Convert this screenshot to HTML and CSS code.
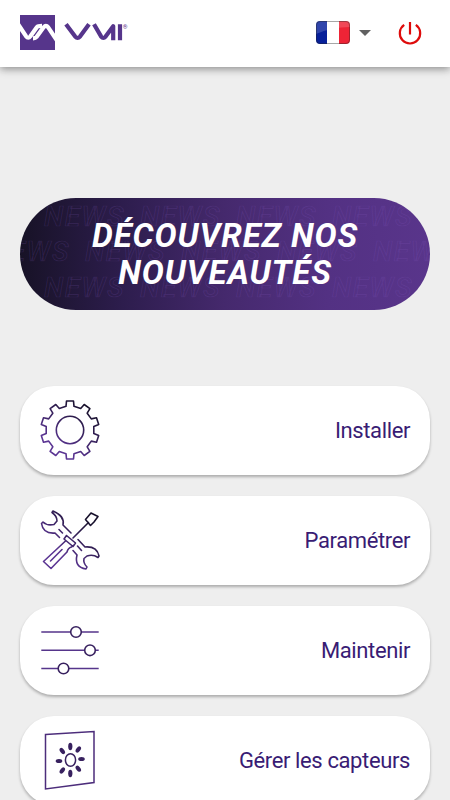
FILE: index.html
```html
<!DOCTYPE html>
<html lang="fr">
  <head>
    <meta charset="utf-8" />
    <meta name="viewport" content="width=device-width, initial-scale=1" />
    <title>VMI</title>
    <link rel="stylesheet" href="styles.css">
  </head>
  <body>
    <header class="topbar">
      <svg class="logo" width="110" height="36" viewBox="20 15 110 36" fill="none" stroke-width="4.2" stroke-linejoin="round">
        <rect x="20" y="15" width="35" height="35" fill="#56358b"/>
        <path d="M18 24L26 36.2Q28.2 39 30.4 36.2L37 27Q38 25.8 42 25.8" stroke="#fff"/>
        <path d="M33 38.3Q35.5 38.3 36.5 37L43.6 27.3Q46 24.6 48.2 27.3L57 40.5" stroke="#fff"/>
        <path d="M66 24.3L75.2 36.6Q77.6 39.2 80 36.6L89 24.3" stroke="#56358b"/>
        <path d="M94 24.3L101.2 36.6Q103.3 39.2 105.6 36.6L113.2 26.2V40.3M120 24.3V40.3" stroke="#56358b"/>
        <text class="logo-mark" x="122.8" y="28.5">®</text>
      </svg>
      <div class="actions">
        <svg class="flag" width="34" height="23" viewBox="0 0 34 23">
          <defs>
            <clipPath id="flagClip"><rect width="34" height="23" rx="4"/></clipPath>
          </defs>
          <g clip-path="url(#flagClip)">
            <path fill="#07209a" d="M0 0h11v23H0z"/>
            <path fill="#fff" d="M11 0h12v23H11z"/>
            <path fill="#ee2436" d="M23 0h11v23H23z"/>
            <path fill="#fff" opacity=".17" d="M0 0H34V6Q16 6 0 13z"/>
          </g>
          <rect x=".5" y=".5" width="33" height="22" rx="3.5" fill="none" stroke="#222" stroke-opacity=".4"/>
        </svg>
        <svg class="caret" width="12" height="6" viewBox="0 0 12 6"><path d="M0 0H12L6 6z" fill="#616161"/></svg>
        <svg class="power" width="24" height="24" viewBox="0 0 24 24" fill="none" stroke="#de0b0b" stroke-width="2.2">
          <path d="M12 1V13.5M6.2 3.9A10.2 10.2 0 1 0 17.8 3.9"/>
        </svg>
      </div>
    </header>

    <main class="content">
      <a class="banner">
        <div class="banner-pattern">
          <div class="pattern-row"><span>NEWS</span><span>NEWS</span><span>NEWS</span><span>NEWS</span></div>
          <div class="pattern-row shifted"><span>NEWS</span><span>NEWS</span><span>NEWS</span><span>NEWS</span><span>NEWS</span></div>
          <div class="pattern-row"><span>NEWS</span><span>NEWS</span><span>NEWS</span><span>NEWS</span></div>
        </div>
        <div class="banner-title">DÉCOUVREZ NOS<br>NOUVEAUTÉS</div>
      </a>

      <nav class="menu">
        <a class="card">
          <svg width="60" height="60" viewBox="-30 -30 60 60" fill="none" stroke="url(#ink)" stroke-width="1.6" stroke-linejoin="round">
            <defs>
              <linearGradient id="ink" gradientUnits="userSpaceOnUse" x1="15" y1="-24" x2="-12" y2="16">
                <stop offset="0" stop-color="#17102b"/>
                <stop offset="1" stop-color="#5b3593"/>
              </linearGradient>
            </defs>
            <circle r="13.7"/>
            <path d="M-4-23.7L-3.5-29H3.5L4-23.7L10.7-21.5L14.2-25.5L19.9-21.4L17.2-16.8L21.3-11.1L26.5-12.3L28.7-5.6L23.8-3.5V3.5L28.7 5.6L26.5 12.3L21.3 11.1L17.2 16.8L19.9 21.4L14.2 25.5L10.7 21.5L4 23.7L3.5 29H-3.5L-4 23.7L-10.7 21.5L-14.2 25.5L-19.9 21.4L-17.2 16.8L-21.3 11.1L-26.5 12.3L-28.7 5.6L-23.8 3.5V-3.5L-28.7-5.6L-26.5-12.3L-21.3-11.1L-17.2-16.8L-19.9-21.4L-14.2-25.5L-10.7-21.5Z"/>
          </svg>
          <span>Installer</span>
        </a>
        <a class="card">
          <svg width="60" height="60" viewBox="0 0 60 60" fill="none" stroke="url(#toolInk)" stroke-width="1.6" stroke-linejoin="round" stroke-linecap="round">
            <defs>
              <linearGradient id="toolInk" gradientUnits="userSpaceOnUse" x1="48" y1="10" x2="18" y2="42">
                <stop offset="0" stop-color="#17102b"/>
                <stop offset="1" stop-color="#5b3593"/>
              </linearGradient>
            </defs>
            <path d="M31 23L23 15Q25 6 13 1L12 2.5Q17 6 17 11L14 14.5Q7 16 3 12L1.5 13.5Q3 24 15 23L19.5 27.5M19 19.5L22.5 23"/>
            <path d="M38 29.5L45 37Q57 36 59 46L58 47.5Q53 44 47 46L44 48.5Q43 53 47 57L46 59Q34 57 37 45L33 40.5M37.5 36L41.5 40.5"/>
            <path d="M33 28L48.5 12.5M45.5 9.5L51 3L58 6.5L54 12L50.5 15.5Z"/>
            <path d="M26.5 25.5L35.5 33L33 36.5L24 29Z M25.5 31L3.5 51.5L11 58.5L27 42Q28 38 31.5 37M10.5 51L22 39.5"/>
          </svg>
          <span>Paramétrer</span>
        </a>
        <a class="card">
          <svg width="60" height="60" viewBox="0 0 60 60" fill="#fff" stroke="#56358b" stroke-width="1.6">
            <path d="M1.3 12H58.7M1.3 30.3H58.7M1.3 48.5H58.7"/>
            <g stroke="#38215f">
              <circle cx="36" cy="12" r="5.3"/>
              <circle cx="50" cy="30.3" r="5.3"/>
              <circle cx="23.5" cy="48.5" r="5.3"/>
            </g>
          </svg>
          <span>Maintenir</span>
        </a>
        <a class="card">
          <svg width="60" height="60" viewBox="0 0 60 60" fill="none" stroke="#4c2d7b" stroke-width="1.5">
            <path d="M5.5 4.5L54 1.5V52.5L5.5 59Z"/>
            <ellipse cx="30.5" cy="30" rx="5.1" ry="6.3" stroke="#38215f"/>
            <g fill="#38215f" stroke="none">
              <ellipse cx="30.3" cy="16.5" rx="2.1" ry="3.7"/>
              <ellipse cx="30.3" cy="43.5" rx="2.1" ry="3.7"/>
              <ellipse cx="19" cy="31" rx="3.3" ry="2.1"/>
              <ellipse cx="41.5" cy="29" rx="3.3" ry="2.1"/>
              <ellipse cx="22.3" cy="21" rx="2.1" ry="3.5" transform="rotate(-38 22.3 21)"/>
              <ellipse cx="38.3" cy="19.5" rx="2.1" ry="3.5" transform="rotate(38 38.3 19.5)"/>
              <ellipse cx="22.3" cy="40.5" rx="2.1" ry="3.5" transform="rotate(38 22.3 40.5)"/>
              <ellipse cx="38.3" cy="38.7" rx="2.1" ry="3.5" transform="rotate(-38 38.3 38.7)"/>
            </g>
          </svg>
          <span>Gérer les capteurs</span>
        </a>
      </nav>
    </main>
  </body>
</html>
```
FILE: styles.css
```css
* {
  box-sizing: border-box;
}

body {
  margin: 0;
  height: 800px;
  overflow: hidden;
  background: #eee;
  font-family: Roboto, "Liberation Sans", sans-serif;
}

.topbar {
  height: 67px;
  padding: 15px 28px 0 20px;
  display: flex;
  justify-content: space-between;
  align-items: flex-start;
  background: #fff;
  box-shadow: 0 2px 8px rgba(0, 0, 0, 0.42);
}

.logo-mark {
  font-size: 6px;
  fill: #56358b;
}

.actions {
  display: flex;
  align-items: center;
  height: 35px;
}

.caret {
  margin: 0 27px 0 9px;
}

.content {
  padding: 130.5px 20px 0;
}

.banner {
  position: relative;
  display: flex;
  align-items: center;
  justify-content: center;
  height: 112px;
  border-radius: 56px;
  overflow: hidden;
  background: linear-gradient(90deg, #171226 0%, #2d1d4d 25%, #45296d 50%, #533183 75%, #59358b 100%);
}

.banner-pattern {
  position: absolute;
  inset: 0;
  padding-top: 1px;
}

.pattern-row {
  display: flex;
  padding-left: 24px;
  height: 35.5px;
  line-height: 35.5px;
  font-size: 28px;
  font-style: italic;
  font-weight: 500;
  letter-spacing: 1.5px;
  color: transparent;
  -webkit-text-stroke: 0.7px rgba(140, 95, 200, 0.2);
}

.pattern-row span {
  flex: 0 0 96px;
}

.pattern-row.shifted {
  padding-left: 0;
  margin-left: -31px;
}

.banner-title {
  position: relative;
  padding-top: 1px;
  color: #fff;
  font-size: 33px;
  font-weight: 700;
  font-style: italic;
  line-height: 37.5px;
  letter-spacing: 0.9px;
  text-align: center;
}

.menu {
  display: flex;
  flex-direction: column;
  gap: 20.5px;
  padding-top: 76px;
}

.card {
  display: flex;
  align-items: center;
  justify-content: space-between;
  height: 89.5px;
  padding: 0 20px;
  border-radius: 34px;
  background: #fff;
  color: #391c74;
  font-size: 22px;
  letter-spacing: -0.38px;
  box-shadow: 0 2px 3px rgba(0, 0, 0, 0.28);
}
```
